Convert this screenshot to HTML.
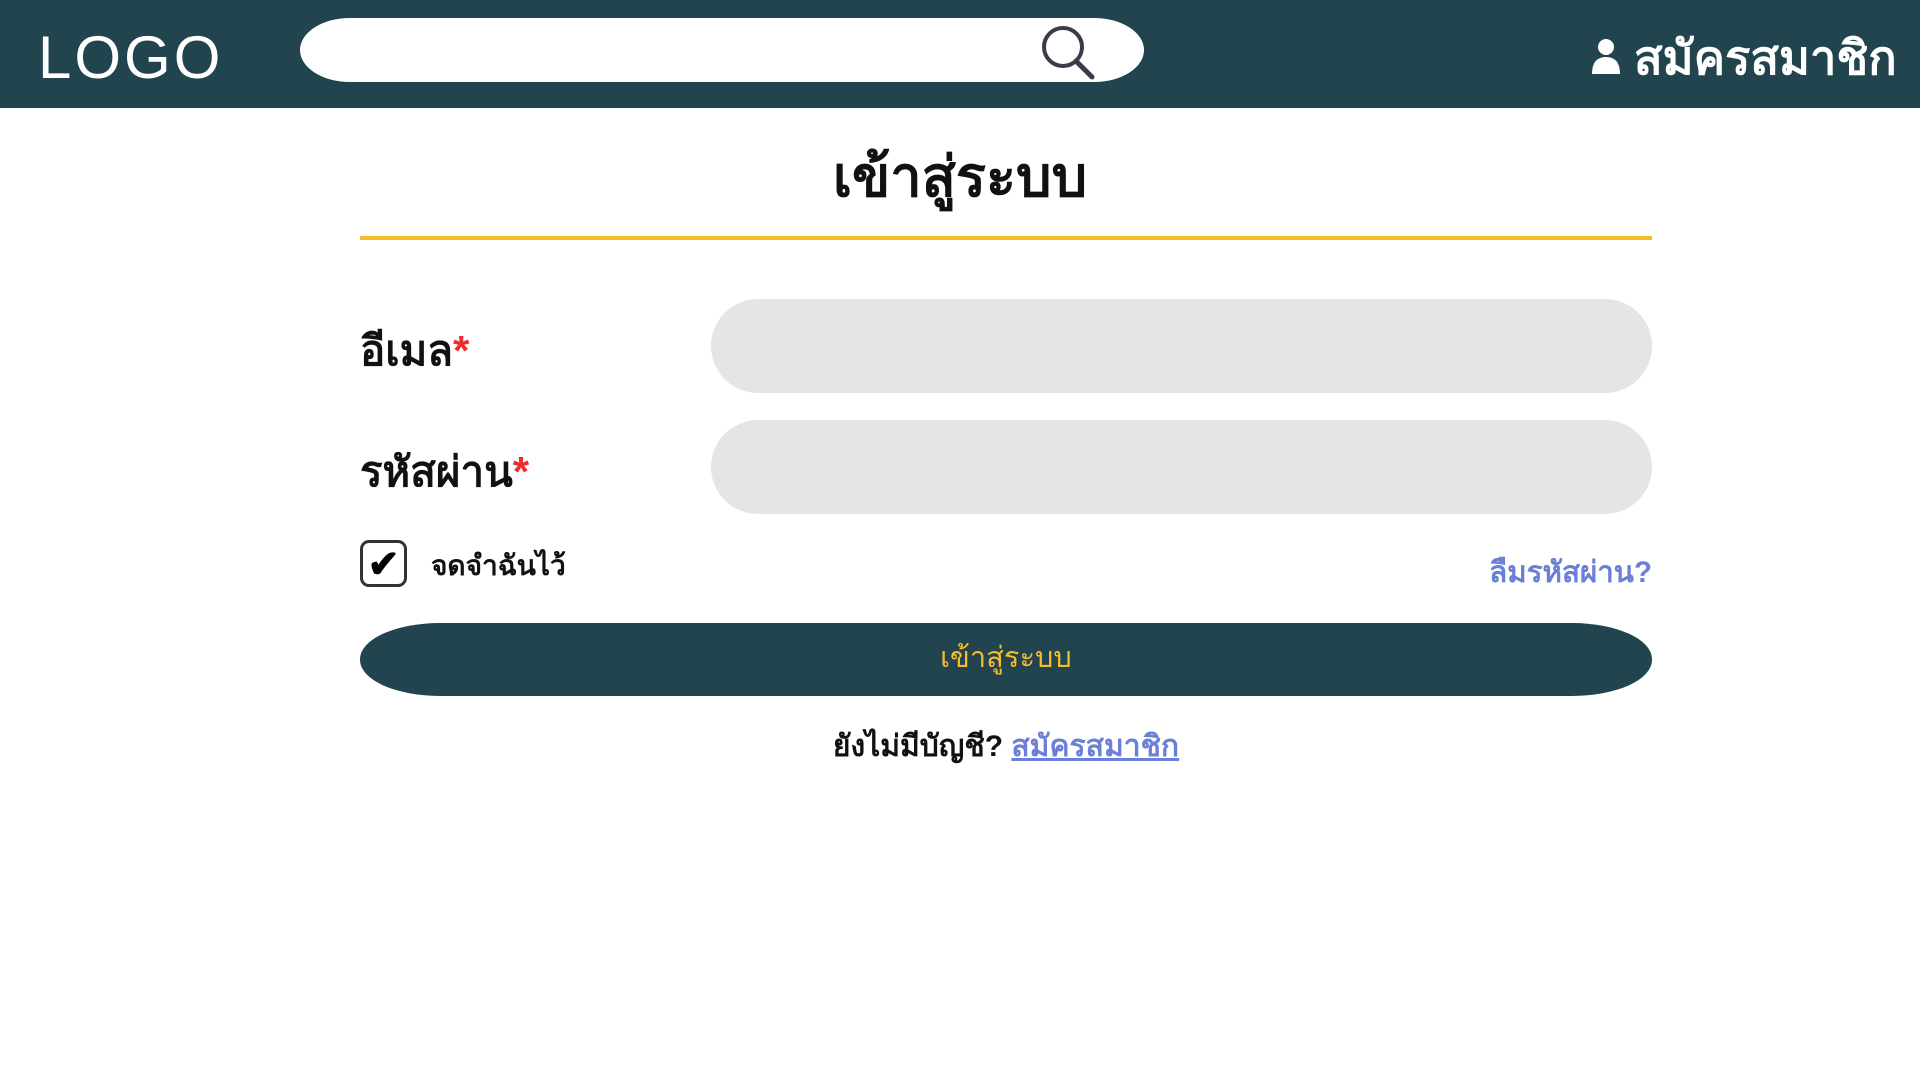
<!DOCTYPE html>
<html><head><meta charset="utf-8"><style>
*{margin:0;padding:0;box-sizing:border-box}
body{width:1920px;height:1080px;background:#fff;font-family:"Liberation Sans","Noto Sans CJK SC",sans-serif;position:relative;overflow:hidden}
.hdr{position:absolute;left:0;top:0;width:1920px;height:108px;background:#22444e}
.logo{position:absolute;left:38px;top:23px;color:#fff;font-size:60px;letter-spacing:3px;font-weight:400}
.search{position:absolute;left:300px;top:18px;width:844px;height:64px;background:#fff;border-radius:50px/32px}
.reg{position:absolute;left:1634px;top:20px;color:#fff;font-size:47px;font-weight:bold}
.abs{position:absolute}
.lbl{font-size:42px;font-weight:bold;color:#111}
.star{color:#ef2b2b}
.inp{position:absolute;left:711px;width:941px;height:94px;background:#e6e5e3;border-radius:47px}
</style></head><body>
<div class="hdr">
<div class="logo">LOGO</div>
<div class="search"></div>
<svg class="abs" style="left:1038px;top:22px" width="60" height="60" viewBox="0 0 60 60"><circle cx="25" cy="25" r="19" fill="none" stroke="#3b3c4a" stroke-width="4"/><line x1="38" y1="39" x2="54" y2="55" stroke="#3b3c4a" stroke-width="5" stroke-linecap="round"/></svg>
<svg class="abs" style="left:1590px;top:38px" width="32" height="36" viewBox="0 0 32 36"><circle cx="16" cy="9" r="8" fill="#fff"/><path d="M2 36 Q2 19 16 19 Q30 19 30 36Z" fill="#fff"/></svg>
<div class="reg">สมัครสมาชิก</div>
</div>
<div class="abs" style="left:0;width:1920px;top:132px;text-align:center;font-size:56px;font-weight:bold;color:#111">เข้าสู่ระบบ</div>
<div class="abs" style="left:360px;top:236px;width:1292px;height:4px;background:#f5bd2c"></div>
<div class="abs lbl" style="left:360px;top:318px">อีเมล<span class="star">*</span></div>
<div class="inp" style="top:299px"></div>
<div class="abs lbl" style="left:360px;top:439px">รหัสผ่าน<span class="star">*</span></div>
<div class="inp" style="top:420px"></div>
<div class="abs" style="left:360px;top:540px;width:47px;height:47px;border:3px solid #333;border-radius:9px;text-align:center;font-size:38px;line-height:44px;color:#000;font-weight:bold">✔</div>
<div class="abs" style="left:431px;top:544px;font-size:28px;font-weight:bold;color:#111">จดจำฉันไว้</div>
<div class="abs" style="right:268px;top:548px;font-size:29.5px;font-weight:bold;color:#6b7fd7">ลืมรหัสผ่าน?</div>
<div class="abs" style="left:360px;top:623px;width:1292px;height:73px;background:#22444e;border-radius:80px/36px;color:#f5bd2c;font-size:29px;text-align:center;line-height:70px">เข้าสู่ระบบ</div>
<div class="abs" style="left:360px;width:1292px;top:723px;text-align:center;font-size:30px;font-weight:bold;color:#111">ยังไม่มีบัญชี? <span style="color:#6b7fd7;text-decoration:underline">สมัครสมาชิก</span></div>
</body></html>
